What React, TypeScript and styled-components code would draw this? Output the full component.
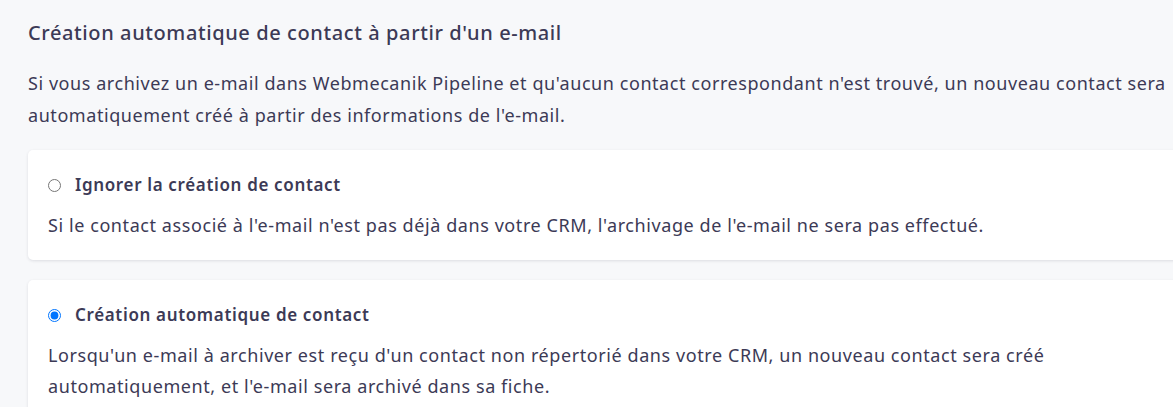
import React from 'react';
import styled, { createGlobalStyle } from 'styled-components';

const GlobalStyle = createGlobalStyle`
  html, body {
    margin: 0;
    padding: 0;
    background: #f7f8fa;
    overflow: hidden;
  }
  body {
    font-family: "Noto Sans", "Open Sans", sans-serif;
    color: #3c3a56;
  }
`;

const Page = styled.div`
  width: 1162px;
  padding: 19px 0 0 28px;
`;

const Title = styled.h2`
  margin: 0 0 20px;
  font-size: 20px;
  font-weight: 500;
  line-height: 28px;
  letter-spacing: 0.6px;
`;

const Intro = styled.p`
  margin: 0 0 19px;
  font-size: 18px;
  line-height: 32px;
  letter-spacing: 0.56px;
`;

const Options = styled.div`
  display: flex;
  flex-direction: column;
  gap: 20px;
`;

const Card = styled.label`
  display: block;
  background: #fff;
  border-radius: 5px;
  box-shadow: 0 1px 3px rgba(30, 35, 60, 0.12);
  padding: 23px 20px 19px;
  cursor: pointer;
`;

const OptionHead = styled.div`
  display: flex;
  align-items: center;
  gap: 14px;
  margin-bottom: 13px;
`;

const Radio = styled.input`
  width: 13px;
  height: 13px;
  margin: 0;
  flex: none;
  accent-color: #0075ff;
`;

const OptionTitle = styled.span`
  font-size: 17px;
  font-weight: 600;
  line-height: 24px;
  letter-spacing: 0.65px;
`;

const OptionText = styled.p`
  margin: 0;
  font-size: 18px;
  line-height: 31px;
  letter-spacing: 0.58px;
`;

const options = [
  {
    id: 'ignore',
    title: 'Ignorer la création de contact',
    text: "Si le contact associé à l'e-mail n'est pas déjà dans votre CRM, l'archivage de l'e-mail ne sera pas effectué.",
  },
  {
    id: 'auto',
    title: 'Création automatique de contact',
    text: "Lorsqu'un e-mail à archiver est reçu d'un contact non répertorié dans votre CRM, un nouveau contact sera créé automatiquement, et l'e-mail sera archivé dans sa fiche.",
  },
];

export default function App() {
  const [choice, setChoice] = React.useState('auto');
  return (
    <Page>
      <GlobalStyle />
      <Title>Création automatique de contact à partir d'un e-mail</Title>
      <Intro>
        Si vous archivez un e-mail dans Webmecanik Pipeline et qu'aucun contact correspondant n'est trouvé, un
        nouveau contact sera automatiquement créé à partir des informations de l'e-mail.
      </Intro>
      <Options>
        {options.map((o) => (
          <Card key={o.id}>
            <OptionHead>
              <Radio
                type="radio"
                name="contact-creation"
                checked={choice === o.id}
                onChange={() => setChoice(o.id)}
              />
              <OptionTitle>{o.title}</OptionTitle>
            </OptionHead>
            <OptionText>{o.text}</OptionText>
          </Card>
        ))}
      </Options>
    </Page>
  );
}
